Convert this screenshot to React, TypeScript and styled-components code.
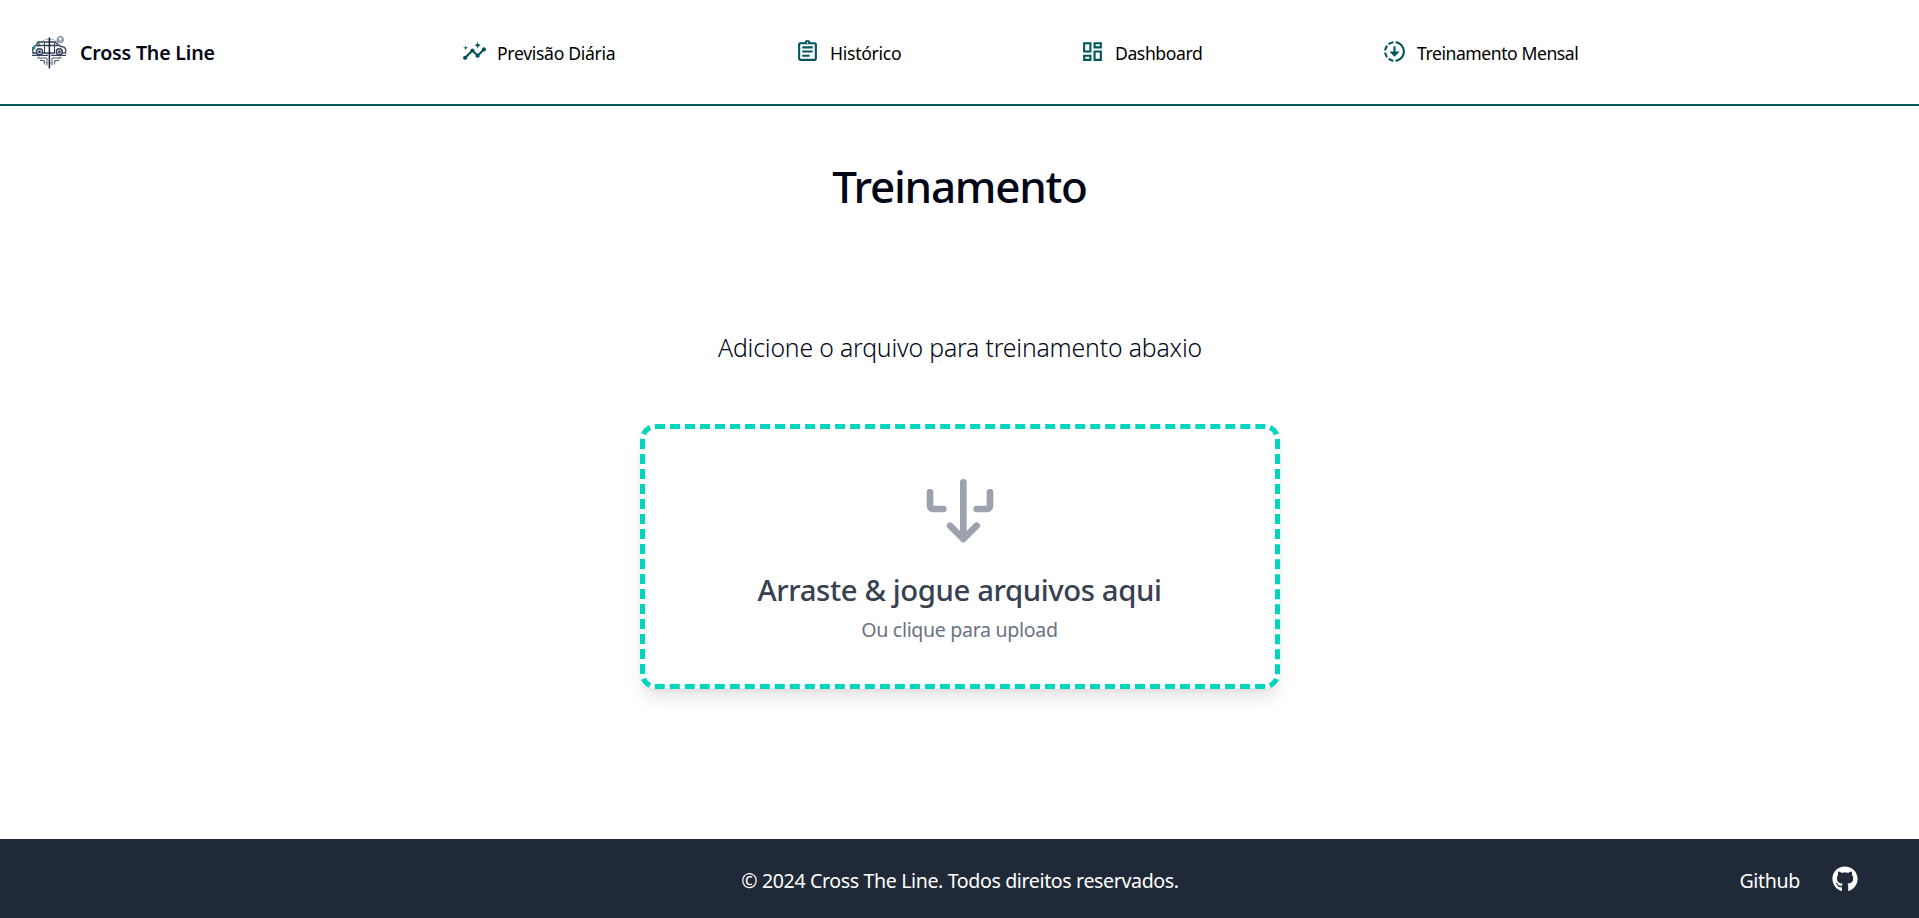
import React from "react";
import styled, { createGlobalStyle } from "styled-components";
import {
  MdInsights,
  MdOutlineAssignment,
  MdOutlineDashboard,
  MdDownloading,
} from "react-icons/md";
import { FaGithub } from "react-icons/fa";

const GlobalStyle = createGlobalStyle`
  *, *::before, *::after { box-sizing: border-box; }
  body {
    margin: 0;
    background: #fff;
    color: #020617;
    font-family: "Segoe UI", "Noto Sans", "Open Sans", sans-serif;
  }
  h1, h2, p { margin: 0; }
  a { color: inherit; text-decoration: none; }
`;

const Page = styled.div`
  display: flex;
  flex-direction: column;
  height: 918px;
`;

const Header = styled.header`
  display: flex;
  align-items: center;
  height: 106px;
  padding-left: 31px;
  border-bottom: 2px solid #00555a;
`;

const Brand = styled.a`
  display: flex;
  align-items: center;
  gap: 12px;
  width: 431px;
  font-size: 19.6px;
  font-weight: 600;
  line-height: 28px;
  letter-spacing: -0.2px;
`;

const BrandName = styled.span`
  padding-top: 2px;
`;

const Logo = styled.svg`
  width: 37px;
  height: 37px;
  flex: none;
`;

const Nav = styled.nav`
  display: flex;
  align-items: center;
  gap: 180px;
`;

const NavLink = styled.a<{ $width: number; $tracking: number; $mirrored?: boolean }>`
  display: flex;
  align-items: center;
  gap: 10px;
  width: ${(p) => p.$width}px;
  color: #000;
  font-size: 17.6px;
  line-height: 28px;
  letter-spacing: ${(p) => p.$tracking}px;
  white-space: nowrap;

  svg {
    flex: none;
    width: 25px;
    height: 25px;
    margin-bottom: 1px;
    color: #00555a;
    transform: ${(p) => (p.$mirrored ? "scaleX(-1)" : "none")};
  }
`;

const NavText = styled.span`
  padding-top: 1px;
`;

const Main = styled.main`
  display: flex;
  flex: 1;
  flex-direction: column;
  align-items: center;
  padding-top: 50px;
`;

const Title = styled.h1`
  font-size: 44px;
  font-weight: 500;
  line-height: 60px;
  letter-spacing: -1.27px;
`;

const Subtitle = styled.p`
  margin-top: 111px;
  padding-left: 1px;
  font-size: 24.8px;
  font-weight: 300;
  line-height: 40px;
  letter-spacing: -0.18px;
`;

const DropZone = styled.section`
  display: flex;
  flex-direction: column;
  align-items: center;
  width: 640px;
  height: 265px;
  margin-top: 57px;
  padding-top: 40px;
  border: 5px dashed #00d5be;
  border-radius: 15px;
  background: #fff;
  box-shadow: 0 12.5px 18.75px -3.75px rgba(0, 0, 0, 0.1), 0 5px 7.5px -5px rgba(0, 0, 0, 0.1);
`;

const DropIcon = styled.svg`
  width: 80px;
  height: 80px;
  color: #9ca3af;
`;

const DropTitle = styled.h2`
  margin-top: 21px;
  color: #374151;
  font-size: 29.3px;
  font-weight: 500;
  line-height: 40px;
  letter-spacing: -0.4px;
`;

const DropHint = styled.p`
  margin-top: 5px;
  color: #6b7280;
  font-size: 19.6px;
  line-height: 30px;
  letter-spacing: -0.33px;
`;

const Footer = styled.footer`
  display: grid;
  grid-template-columns: 1fr auto 1fr;
  align-items: center;
  height: 79px;
  padding: 4px 61px 0;
  background: #1f2937;
  color: #fff;
  font-size: 19.6px;
  line-height: 30px;
`;

const Copyright = styled.p`
  grid-column: 2;
  padding-left: 1px;
  letter-spacing: -0.38px;
`;

const FooterLink = styled.a`
  display: flex;
  justify-self: end;
  align-items: center;
  gap: 32px;
  letter-spacing: -0.35px;

  svg {
    width: 26px;
    height: 26px;
    margin-bottom: 4px;
  }
`;

function BrandLogo() {
  return (
    <Logo viewBox="0 0 37 37" fill="none" stroke="#35445a" strokeWidth="1">
      <circle cx="18.4" cy="17" r="12" stroke="#7c8796" strokeWidth=".8" strokeDasharray="4 1.2" />
      <path d="M5 11.5 7 8h17l4.500 4 5 1.400 1.200 2v3.400H31M24 19H12M5 19H1.800v-5.500l3.200-2h22" strokeWidth="1.3" />
      <path d="M8 8v3.500M13.500 8v11M23.500 8v11" />
      <circle cx="8.5" cy="17.8" r="3" fill="#fff" strokeWidth="1.5" />
      <circle cx="8.5" cy="17.8" r="1.1" fill="#35445a" />
      <circle cx="28.3" cy="17.8" r="3" fill="#fff" strokeWidth="1.5" />
      <circle cx="28.3" cy="17.8" r="1.1" fill="#35445a" />
      <path d="M2.200 12.500h1.800v2.600H2.200z" fill="#1598a0" stroke="#1598a0" strokeWidth=".8" />
      <path d="M1 21.300h16M20 21.300h15" strokeWidth="1.2" />
      <path d="M6 24h10v7.500M21 31.500V24h10M9 26.500h4.300v4M23.700 30.500v-4H28" stroke="#536175" />
      <path d="M18.400 3.500v31" stroke="#172238" strokeWidth="1.5" />
      <circle cx="29.3" cy="5.6" r="2.9" stroke="#6f8496" strokeWidth="1.2" />
      <path d="M27.800 4.600v2.300h3V4.600" stroke="#6f8496" strokeWidth=".9" />
    </Logo>
  );
}

const links = [
  { label: "Previsão Diária", Icon: MdInsights, width: 153, tracking: -0.32 },
  { label: "Histórico", Icon: MdOutlineAssignment, width: 105, tracking: -0.28 },
  { label: "Dashboard", Icon: MdOutlineDashboard, width: 122, tracking: -0.42 },
  { label: "Treinamento Mensal", Icon: MdDownloading, width: 200, tracking: -0.45, mirrored: true },
];

export default function App() {
  return (
    <Page>
      <GlobalStyle />
      <Header>
        <Brand href="#">
          <BrandLogo />
          <BrandName>Cross The Line</BrandName>
        </Brand>
        <Nav>
          {links.map(({ label, Icon, width, tracking, mirrored }) => (
            <NavLink key={label} href="#" $width={width} $tracking={tracking} $mirrored={mirrored}>
              <Icon />
              <NavText>{label}</NavText>
            </NavLink>
          ))}
        </Nav>
      </Header>
      <Main>
        <Title>Treinamento</Title>
        <Subtitle>Adicione o arquivo para treinamento abaxio</Subtitle>
        <DropZone>
          <DropIcon
            viewBox="0 0 24 24"
            fill="none"
            stroke="currentColor"
            strokeWidth="2"
            strokeLinecap="round"
            strokeLinejoin="round"
          >
            <path d="M3 7v4a1 1 0 0 0 1 1h3M21 7v4a1 1 0 0 1-1 1h-3M13 4v17M9 17l4 4 4-4" />
          </DropIcon>
          <DropTitle>Arraste &amp; jogue arquivos aqui</DropTitle>
          <DropHint>Ou clique para upload</DropHint>
        </DropZone>
      </Main>
      <Footer>
        <Copyright>© 2024 Cross The Line. Todos direitos reservados.</Copyright>
        <FooterLink href="#">
          Github
          <FaGithub />
        </FooterLink>
      </Footer>
    </Page>
  );
}
